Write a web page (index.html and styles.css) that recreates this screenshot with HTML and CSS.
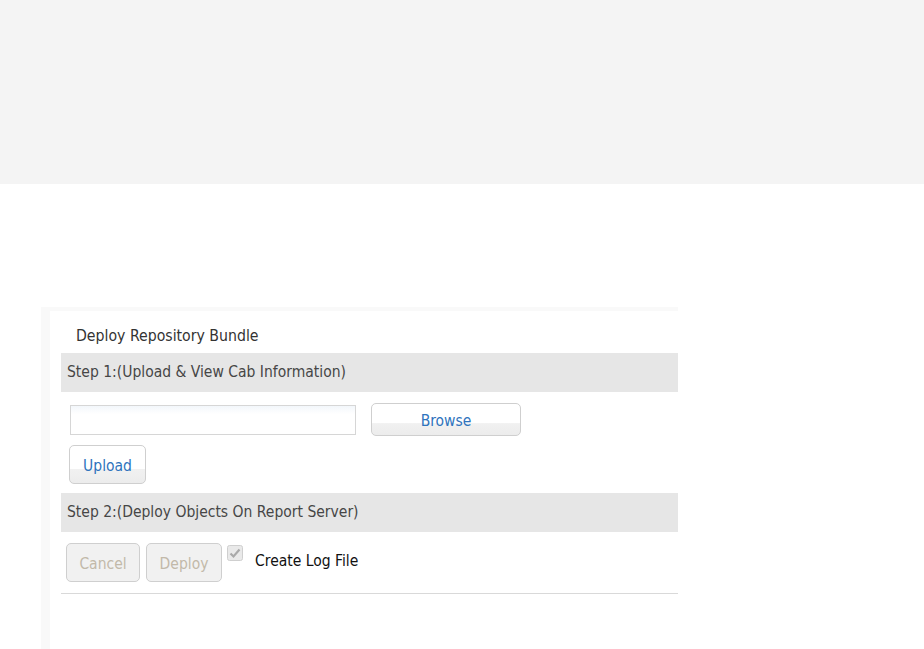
FILE: index.html
```html
<!DOCTYPE html>
<html>
<head>
<meta charset="utf-8">
<link rel="stylesheet" href="styles.css">
</head>
<body>
<div class="topbar"></div>
<div class="content">
  <div class="panel">
    <div class="inner">
      <div class="title">Deploy Repository Bundle</div>
      <div class="bar">Step 1:(Upload &amp; View Cab Information)</div>
      <div class="row1">
        <input class="file-input" type="text">
        <button class="btn browse">Browse</button>
      </div>
      <div class="row2">
        <button class="btn upload">Upload</button>
      </div>
      <div class="bar">Step 2:(Deploy Objects On Report Server)</div>
      <div class="row3">
        <button class="btn disabled cancel" disabled>Cancel</button>
        <button class="btn disabled deploy" disabled>Deploy</button>
        <span class="check">
          <svg width="16" height="16" viewBox="0 0 16 16"><rect x="0.5" y="0.5" width="15" height="15" rx="2" fill="#e9e9e9" stroke="#cfcfcf"/><path d="M3.5 8.5 L6.5 11.5 L12.5 4.5" fill="none" stroke="#a9a9a9" stroke-width="2.2"/></svg>
        </span>
        <span class="check-label">Create Log File</span>
      </div>
      <div class="rule"></div>
    </div>
  </div>
</div>
</body>
</html>
```

FILE: styles.css
```css
html, body {
  margin: 0;
  padding: 0;
  background: #ffffff;
  font-family: "DejaVu Sans Condensed", "DejaVu Sans", sans-serif;
  height: 649px;
  overflow: hidden;
}
.topbar {
  height: 184px;
  background: #f4f4f4;
}
.content {
  padding-top: 123px;
  padding-left: 41px;
}
.panel {
  width: 637px;
  background: #f9f9f9;
  padding: 4px 0 0 9px;
  box-sizing: border-box;
  height: 342px;
}
.inner {
  background: #ffffff;
  height: 100%;
  padding-left: 11px;
}
.title {
  padding: 15px 0 0 15px;
  height: 27px;
  line-height: 20px;
  font-size: 15.7px;
  color: #333333;
}
.bar {
  height: 39px;
  line-height: 39px;
  background: #e6e6e6;
  color: #464646;
  font-size: 15.5px;
  padding-left: 6px;
}
.row1 {
  display: flex;
  align-items: center;
  padding: 11px 0 0 9px;
  gap: 15px;
  height: 33px;
}
.file-input {
  width: 286px;
  height: 30px;
  box-sizing: border-box;
  border: 1px solid #d6d6d6;
  background: linear-gradient(#f3f7fb, #ffffff 30%);
  margin: 0;
}
.btn {
  font-family: inherit;
  font-size: 15.5px;
  color: #2f74bd;
  border: 1px solid #cfcfcf;
  border-radius: 5px;
  background: linear-gradient(#ffffff 0%, #ffffff 62%, #f1f1f1 63%, #ececec 100%);
  padding: 0;
  margin: 0;
  box-sizing: border-box;
}
.browse {
  width: 150px;
  height: 33px;
  padding-top: 2px;
}
.row2 {
  padding: 9px 0 0 8px;
  height: 39px;
  margin-bottom: 9px;
}
.upload {
  width: 77px;
  height: 39px;
  padding-top: 2px;
}
.row3 {
  display: flex;
  align-items: flex-start;
  padding: 11px 0 0 5px;
  height: 39px;
}
.disabled {
  background: #f1f1f1;
  color: #c2b9a9;
  height: 39px;
  padding-top: 2px;
}
.cancel {
  width: 74px;
}
.deploy {
  width: 76px;
  margin-left: 6px;
}
.check {
  margin: 2px 0 0 5px;
  width: 16px;
  height: 16px;
}
.check svg {
  display: block;
}
.check-label {
  margin: 9px 0 0 12px;
  font-size: 15.5px;
  color: #111111;
}
.rule {
  margin-top: 11px;
  border-top: 1px solid #d9d9d9;
}
```
